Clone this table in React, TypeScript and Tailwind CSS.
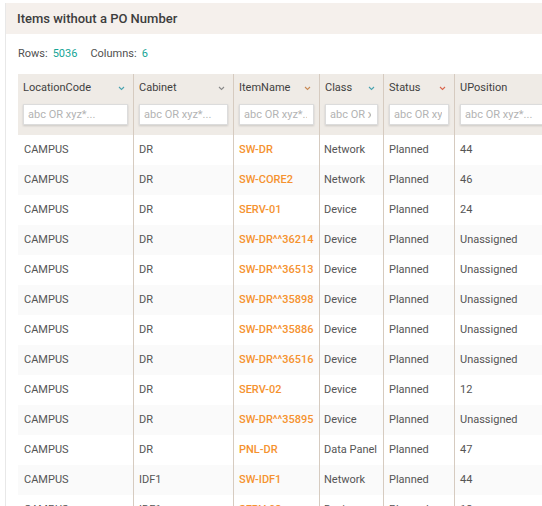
import { FC } from "react";

interface Row {
  location: string;
  cabinet: string;
  item: string;
  cls: string;
  status: string;
  upos: string;
}

const rows: Row[] = [
  { location: "CAMPUS", cabinet: "DR", item: "SW-DR", cls: "Network", status: "Planned", upos: "44" },
  { location: "CAMPUS", cabinet: "DR", item: "SW-CORE2", cls: "Network", status: "Planned", upos: "46" },
  { location: "CAMPUS", cabinet: "DR", item: "SERV-01", cls: "Device", status: "Planned", upos: "24" },
  { location: "CAMPUS", cabinet: "DR", item: "SW-DR^^36214", cls: "Device", status: "Planned", upos: "Unassigned" },
  { location: "CAMPUS", cabinet: "DR", item: "SW-DR^^36513", cls: "Device", status: "Planned", upos: "Unassigned" },
  { location: "CAMPUS", cabinet: "DR", item: "SW-DR^^35898", cls: "Device", status: "Planned", upos: "Unassigned" },
  { location: "CAMPUS", cabinet: "DR", item: "SW-DR^^35886", cls: "Device", status: "Planned", upos: "Unassigned" },
  { location: "CAMPUS", cabinet: "DR", item: "SW-DR^^36516", cls: "Device", status: "Planned", upos: "Unassigned" },
  { location: "CAMPUS", cabinet: "DR", item: "SERV-02", cls: "Device", status: "Planned", upos: "12" },
  { location: "CAMPUS", cabinet: "DR", item: "SW-DR^^35895", cls: "Device", status: "Planned", upos: "Unassigned" },
  { location: "CAMPUS", cabinet: "DR", item: "PNL-DR", cls: "Data Panel", status: "Planned", upos: "47" },
  { location: "CAMPUS", cabinet: "IDF1", item: "SW-IDF1", cls: "Network", status: "Planned", upos: "44" },
  { location: "CAMPUS", cabinet: "IDF1", item: "SERV-03", cls: "Device", status: "Planned", upos: "12" },
];

const columns = [
  { name: "LocationCode", chevron: "text-[#4aa3b0]" },
  { name: "Cabinet", chevron: "text-[#8a8a8a]" },
  { name: "ItemName", chevron: "text-[#c98a55]" },
  { name: "Class", chevron: "text-[#4aa3b0]" },
  { name: "Status", chevron: "text-[#d9664d]" },
  { name: "UPosition", chevron: "" },
];

const gridCols = "grid grid-cols-[115px_100px_86px_64px_71px_120px]";

const Chevron: FC<{ className: string }> = ({ className }) => (
  <svg width="7" height="5" viewBox="0 0 7 5" className={className}>
    <path d="M1 1 L3.5 3.5 L6 1" fill="none" stroke="currentColor" strokeWidth="1.1" />
  </svg>
);

const App: FC = () => {
  return (
    <div
      className="h-[506px] w-[542px] overflow-hidden bg-white pt-[3px] pl-[5px]"
      style={{ fontFamily: "Roboto, 'Liberation Sans', sans-serif" }}
    >
      <div className="h-[600px] border-l border-[#e8e8e8]">
        <div className="flex h-[31px] items-center bg-[#f5f0ec] pl-[11px]">
          <h1 className="text-[13px] font-medium text-[#3d3d3d]">Items without a PO Number</h1>
        </div>
        <div className="pl-[12px]">
          <div className="flex h-[40px] items-center pt-[1px] text-[11px] text-[#505050]">
            <span>Rows:</span>
            <span className="ml-[5px] text-[#16a596]">5036</span>
            <span className="ml-[13px]">Columns:</span>
            <span className="ml-[5px] text-[#16a596]">6</span>
          </div>
          <div className="w-[600px]">
            <div className={`${gridCols} bg-[#efebe6]`}>
              {columns.map((col, i) => (
                <div
                  key={col.name}
                  className={`flex h-[61px] flex-col px-[5px] ${i > 0 ? "border-l border-[#d6cbc0]" : ""}`}
                >
                  <div className="flex h-[28px] items-center justify-between pr-[3px] text-[11px] text-[#3f3f3f]">
                    <span>{col.name}</span>
                    {col.chevron && <Chevron className={col.chevron} />}
                  </div>
                  <input
                    readOnly
                    placeholder="abc OR xyz*..."
                    className="mt-[2px] h-[21px] w-full min-w-0 border border-[#dcdcdc] bg-white pl-[4px] pr-[6px] text-[11px] text-[#555] shadow-[0_1px_2px_rgba(0,0,0,0.15)] outline-none placeholder:text-[#b3b3b3]"
                  />
                </div>
              ))}
            </div>
            {rows.map((row, r) => (
              <div
                key={r}
                className={`${gridCols} h-[30px] text-[11px] text-[#555555] ${r % 2 === 1 ? "bg-[#fafafa]" : "bg-white"}`}
              >
                <div className="flex items-center px-[6px]">{row.location}</div>
                <div className="flex items-center border-l border-[#d6cbc0] px-[5px]">{row.cabinet}</div>
                <div className="flex items-center whitespace-nowrap border-l border-[#d6cbc0] px-[5px] font-medium text-[#f5922f]">{row.item}</div>
                <div className="flex items-center whitespace-nowrap border-l border-[#d6cbc0] px-[4px]">{row.cls}</div>
                <div className="flex items-center border-l border-[#d6cbc0] px-[5px]">{row.status}</div>
                <div className="flex items-center border-l border-[#d6cbc0] px-[5px]">{row.upos}</div>
              </div>
            ))}
          </div>
        </div>
      </div>
    </div>
  );
};

export default App;
